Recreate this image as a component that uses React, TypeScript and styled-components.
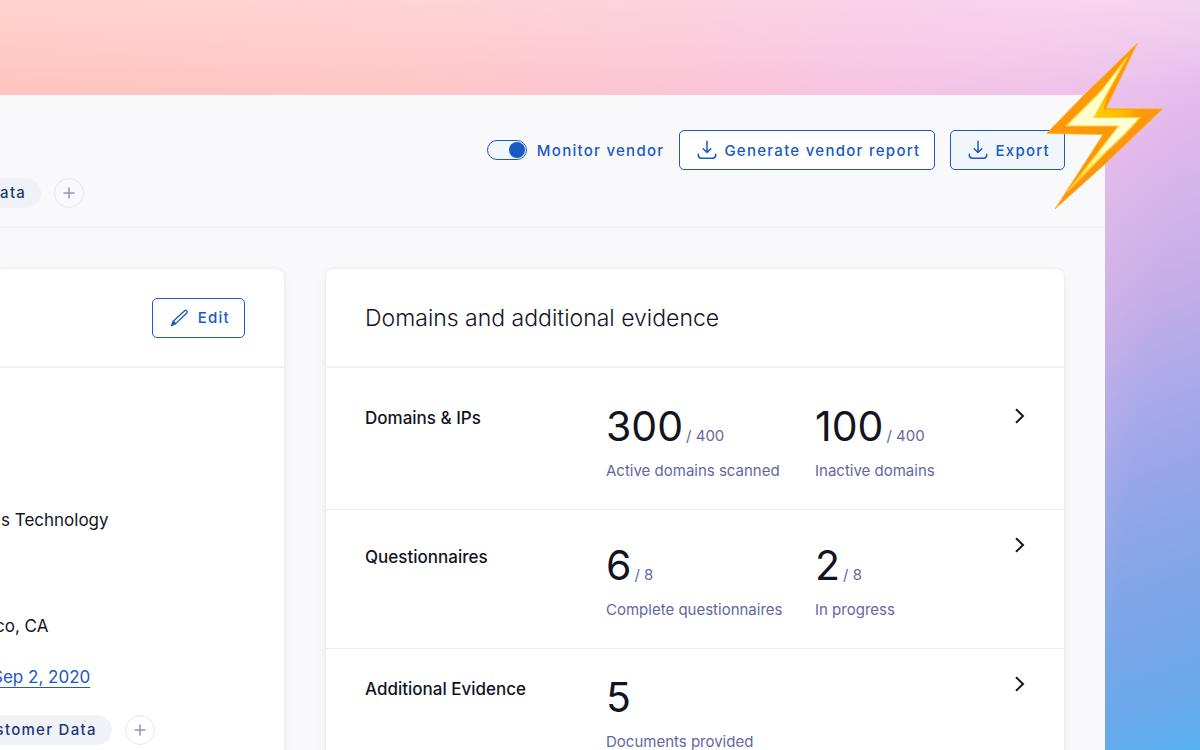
import React from "react";
import styled, { createGlobalStyle } from "styled-components";

const GlobalStyle = createGlobalStyle`
  * { box-sizing: border-box; }
  html, body { margin: 0; }
  body {
    font-family: Inter, "Liberation Sans", sans-serif;
    color: #12141f;
    -webkit-font-smoothing: antialiased;
  }
  h2, h3, p, dl, dd { margin: 0; font-weight: 400; }
  button { font-family: inherit; cursor: pointer; }
`;

const Stage = styled.div`
  height: 100vh;
  overflow: hidden;
  display: flex;
  padding: 95px 95px 0 0;
  background:
    linear-gradient(180deg, rgba(255, 255, 255, 0.25) 0, rgba(255, 255, 255, 0) 90px),
    linear-gradient(98deg, #ffc4be 0%, #ffc6c6 32%, rgba(251, 196, 214, 0.95) 55%, rgba(245, 196, 228, 0.7) 74%, rgba(244, 196, 236, 0) 92%),
    linear-gradient(160deg, #f4c6ec 34%, #e8c0ee 42%, #e0b8ec 47%, #d4b4ea 53%, #c8aee8 59%, #b0aaea 67%, #96a6e8 76%, #7ea6e8 86%, #6aa8ec 95%, #58b2f0 100%);
`;

const Page = styled.main`
  position: relative;
  flex: 1;
  min-width: 0;
  background: #f9f9fb;
`;

const Header = styled.header`
  height: 133px;
  padding: 35px 40px 18px 0;
  display: flex;
  flex-direction: column;
  justify-content: space-between;
  border-bottom: 2px solid #f1f2f5;
`;

const Actions = styled.div`
  display: flex;
  justify-content: flex-end;
  align-items: center;
  gap: 15px;
`;

const ToggleLabel = styled.label`
  display: flex;
  align-items: center;
  gap: 10px;
  font-size: 15px;
  font-weight: 500;
  letter-spacing: 0.085em;
  color: #1b59c4;
`;

const Toggle = styled.input`
  appearance: none;
  margin: 0;
  width: 40px;
  height: 20px;
  padding: 1px;
  display: flex;
  justify-content: flex-end;
  border: 1px solid #1b59c4;
  border-radius: 10px;
  background: #f1f6fc;
  &::before {
    content: "";
    width: 16px;
    height: 16px;
    border-radius: 50%;
    background: #1b59c4;
  }
  &:not(:checked) { justify-content: flex-start; }
`;

const OutlineButton = styled.button<{ $tinted?: boolean }>`
  height: 40px;
  display: flex;
  align-items: center;
  gap: 7px;
  padding: 0 14px 0 17px;
  border: 1px solid #1b59c4;
  border-radius: 5px;
  background: ${(p) => (p.$tinted ? "#f1f6fc" : "#fff")};
  color: #1b59c4;
  font-size: 15px;
  font-weight: 500;
  letter-spacing: 0.085em;
  white-space: nowrap;
`;

const TagRow = styled.div`
  display: flex;
  align-items: center;
  gap: 13px;
`;

const Tag = styled.span<{ $start: number }>`
  flex: none;
  height: 30px;
  line-height: 30px;
  padding: 0 15px;
  margin-left: ${(p) => p.$start}px;
  border-radius: 15px;
  background: #f1f2f7;
  color: #1a3a74;
  font-size: 15px;
  font-weight: 500;
  letter-spacing: 0.085em;
  white-space: nowrap;
`;

const AddButton = styled.button`
  width: 30px;
  height: 30px;
  padding: 0;
  display: grid;
  place-items: center;
  border: 1px solid #e6e7ee;
  border-radius: 50%;
  background: transparent;
  color: #9497c4;
`;

const Columns = styled.div`
  display: flex;
  align-items: stretch;
  gap: 42px;
  padding: 41px 41px 0 0;
`;

const Card = styled.section<{ $side?: boolean }>`
  flex: ${(p) => (p.$side ? "0 0 284px" : "1")};
  min-width: 0;
  background: #fff;
  border-radius: ${(p) => (p.$side ? "0 8px 0 0" : "8px 8px 0 0")};
  box-shadow: 0 0 3px rgba(30, 40, 90, 0.1), 0 6px 16px rgba(30, 40, 90, 0.04);
`;

const CardHeader = styled.div`
  height: 99px;
  padding: 0 39px;
  display: flex;
  align-items: center;
  border-bottom: 2px solid #f1f2f5;
`;

const SideHeader = styled(CardHeader)`
  justify-content: flex-end;
`;

const Title = styled.h2`
  font-size: 23px;
  line-height: 32px;
  font-weight: 350;
`;

const Details = styled.dl`
  padding-top: 140px;
  font-size: 17px;
  line-height: 24px;
  white-space: nowrap;
`;

const Detail = styled.dd<{ $start: number; $gap: number }>`
  margin-left: ${(p) => p.$start}px;
  margin-bottom: ${(p) => p.$gap}px;
`;

const DateLink = styled.a`
  color: #1b59c4;
  text-decoration: underline;
  text-decoration-thickness: 1px;
  text-underline-offset: 4px;
`;

const Row = styled.div<{ $height: number; $top: number }>`
  height: ${(p) => p.$height}px;
  padding: ${(p) => p.$top}px 36px 0 39px;
  display: grid;
  grid-template-columns: 241px 209px 1fr 16px;
  align-items: start;
  border-bottom: 1px solid #ecedf1;
`;

const RowTitle = styled.h3`
  font-size: 17px;
  line-height: 24px;
  font-weight: 500;
`;

const Stat = styled.div`
  white-space: nowrap;
`;

const Figure = styled.p`
  font-size: 41px;
  line-height: 40px;
  font-weight: 400;
`;

const Total = styled.span`
  margin-left: 3px;
  font-size: 15px;
  line-height: 16px;
  color: #6267a1;
`;

const Caption = styled.p`
  margin-top: 15px;
  font-size: 15px;
  line-height: 20px;
  color: #6267a1;
`;

const OpenButton = styled.button<{ $raise: number }>`
  width: 16px;
  height: 22px;
  margin-top: -${(p) => p.$raise}px;
  padding: 0;
  border: 0;
  background: none;
  color: #12141f;
`;

const Bolt = styled.svg`
  position: absolute;
  top: -55px;
  right: -60px;
  width: 122px;
  height: 172px;
`;

const DownloadIcon = () => (
  <svg width="20" height="20" viewBox="0 0 20 20" fill="none" stroke="currentColor" strokeWidth="1.5" strokeLinecap="round" strokeLinejoin="round" aria-hidden="true">
    <path d="M10 1.2v11.200M6.200 8.700l3.800 3.800 3.800-3.800M1.300 14.300v.8a3.200 3.200 0 0 0 3.200 3.200h11a3.200 3.200 0 0 0 3.200-3.200v-.8" />
  </svg>
);

const PencilIcon = () => (
  <svg width="21" height="18" viewBox="0 0 21 18" fill="none" stroke="currentColor" strokeWidth="1.3" strokeLinejoin="round" aria-hidden="true">
    <path d="M3.2 12.300 14.600 1.700a1.600 1.600 0 0 1 2.200 2.300L5.600 14.600z" />
    <path d="M3.200 12.300 1.500 16.700l4.100-2.100z" fill="currentColor" />
  </svg>
);

const PlusIcon = () => (
  <svg width="12" height="12" viewBox="0 0 12 12" stroke="currentColor" strokeWidth="1.6" aria-hidden="true">
    <path d="M6 .5v11M.5 6h11" />
  </svg>
);

const ChevronIcon = () => (
  <svg width="16" height="16" viewBox="0 0 16 16" fill="none" stroke="currentColor" strokeWidth="2" aria-hidden="true">
    <path d="M4 1.2 11 8l-7 6.8" />
  </svg>
);

type StatData = { value: number; total?: number; caption: string };
type RowData = { title: string; height: number; top: number; raise: number; stats: StatData[] };

const rows: RowData[] = [
  {
    title: "Domains & IPs",
    height: 142,
    top: 38,
    raise: 0,
    stats: [
      { value: 300, total: 400, caption: "Active domains scanned" },
      { value: 100, total: 400, caption: "Inactive domains" },
    ],
  },
  {
    title: "Questionnaires",
    height: 139,
    top: 35,
    raise: 10,
    stats: [
      { value: 6, total: 8, caption: "Complete questionnaires" },
      { value: 2, total: 8, caption: "In progress" },
    ],
  },
  {
    title: "Additional Evidence",
    height: 139,
    top: 28,
    raise: 3,
    stats: [{ value: 5, caption: "Documents provided" }],
  },
];

export default function App() {
  return (
    <>
      <GlobalStyle />
      <Stage>
        <Page>
          <Header>
            <Actions>
              <ToggleLabel>
                <Toggle type="checkbox" role="switch" defaultChecked />
                Monitor vendor
              </ToggleLabel>
              <OutlineButton type="button">
                <DownloadIcon />
                Generate vendor report
              </OutlineButton>
              <OutlineButton type="button" $tinted>
                <DownloadIcon />
                Export
              </OutlineButton>
            </Actions>
            <TagRow>
              <Tag $start={-27}>Data</Tag>
              <AddButton type="button" aria-label="Add label"><PlusIcon /></AddButton>
            </TagRow>
          </Header>
          <Columns>
            <Card $side>
              <SideHeader>
                <OutlineButton type="button">
                  <PencilIcon />
                  Edit
                </OutlineButton>
              </SideHeader>
              <Details>
                <Detail $start={1} $gap={82}>s Technology</Detail>
                <Detail $start={-5} $gap={27}>co, CA</Detail>
                <Detail $start={-8} $gap={26}><DateLink href="#assessment">Sep 2, 2020</DateLink></Detail>
              </Details>
              <TagRow>
                <Tag $start={-42}>Customer Data</Tag>
                <AddButton type="button" aria-label="Add attribute"><PlusIcon /></AddButton>
              </TagRow>
            </Card>
            <Card>
              <CardHeader>
                <Title>Domains and additional evidence</Title>
              </CardHeader>
              {rows.map((row) => (
                <Row key={row.title} $height={row.height} $top={row.top}>
                  <RowTitle>{row.title}</RowTitle>
                  {row.stats.map((s) => (
                    <Stat key={s.caption}>
                      <Figure>
                        {s.value}
                        {s.total && <Total>/ {s.total}</Total>}
                      </Figure>
                      <Caption>{s.caption}</Caption>
                    </Stat>
                  ))}
                  {row.stats.length < 2 && <span />}
                  <OpenButton type="button" $raise={row.raise} aria-label={`Open ${row.title}`}><ChevronIcon /></OpenButton>
                </Row>
              ))}
            </Card>
          </Columns>
          <Bolt viewBox="1043 40 122 172" aria-hidden="true">
            <defs>
              <linearGradient id="edge" x1="0" y1="0" x2="0.3" y2="1">
                <stop offset="0" stopColor="#f59a12" />
                <stop offset="0.5" stopColor="#ff9808" />
                <stop offset="1" stopColor="#f7941a" />
              </linearGradient>
              <linearGradient id="band" x1="0" y1="0" x2="1" y2="0">
                <stop offset="0" stopColor="#ffcc00" />
                <stop offset="0.5" stopColor="#ffc000" />
                <stop offset="1" stopColor="#ff9600" />
              </linearGradient>
              <linearGradient id="core" x1="0" y1="0" x2="0" y2="1">
                <stop offset="0" stopColor="#ffe680" />
                <stop offset="0.15" stopColor="#ffffc0" />
                <stop offset="0.65" stopColor="#ffffd8" />
                <stop offset="0.85" stopColor="#ffee50" />
                <stop offset="1" stopColor="#ffb000" />
              </linearGradient>
            </defs>
            <path d="M1137.500 43 1106 108.500 1162.500 109 1104 165 1055 209 1103 134.500 1046.500 133.500 1082 97z" fill="url(#edge)" stroke="#ffb820" strokeWidth="0.800" />
            <path d="M1107 98 1103.500 109.500H1144L1138 117H1092z" fill="url(#band)" />
            <path d="M1127 57.500 1094 117.500H1140Q1126 134 1107 151L1068 191 1118.500 126H1066L1101 91z" fill="url(#core)" stroke="#ffd030" strokeWidth="1.200" strokeLinejoin="round" />
          </Bolt>
        </Page>
      </Stage>
    </>
  );
}
